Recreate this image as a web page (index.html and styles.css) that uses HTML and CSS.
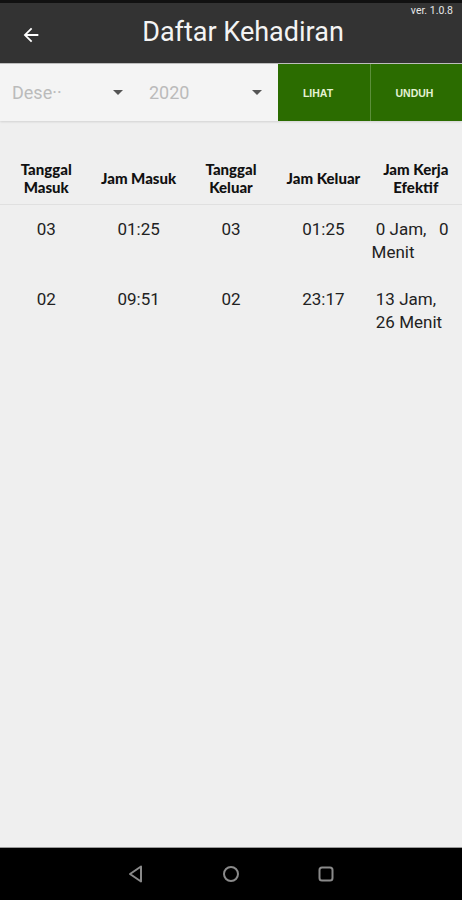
FILE: index.html
```html
<!DOCTYPE html>
<html lang="id">
<head>
    <meta charset="UTF-8">
    <meta name="viewport" content="width=device-width, initial-scale=1.0">
    <title>Daftar Kehadiran</title>
    <link rel="stylesheet" href="styles.css">
</head>
<body>
    <div class="screen">
        <div class="appbar">
            <span class="version">ver. 1.0.8</span>
            <svg class="back" width="22" height="22" viewBox="0 0 24 24">
                <path d="M20 11H7.83l5.59-5.59L12 4l-8 8 8 8 1.41-1.41L7.83 13H20v-2z" fill="#fff"/>
            </svg>
            <h1 class="title">Daftar Kehadiran</h1>
        </div>

        <div class="filter">
            <div class="select select-month">
                <span class="select-text">Dese··</span>
                <span class="caret"></span>
            </div>
            <div class="select select-year">
                <span class="select-text">2020</span>
                <span class="caret"></span>
            </div>
            <div class="btn btn-view">LIHAT</div>
            <div class="btn btn-download">UNDUH</div>
        </div>

        <div class="table">
            <div class="row head">
                <div class="cell">Tanggal<br>Masuk</div>
                <div class="cell">Jam Masuk</div>
                <div class="cell">Tanggal<br>Keluar</div>
                <div class="cell">Jam Keluar</div>
                <div class="cell">Jam Kerja<br>Efektif</div>
            </div>
            <div class="row data">
                <div class="cell">03</div>
                <div class="cell">01:25</div>
                <div class="cell">03</div>
                <div class="cell">01:25</div>
                <div class="cell cell-left">&nbsp;0 Jam,&nbsp;&nbsp; 0<br>Menit</div>
            </div>
            <div class="row data">
                <div class="cell">02</div>
                <div class="cell">09:51</div>
                <div class="cell">02</div>
                <div class="cell">23:17</div>
                <div class="cell cell-left">&nbsp;13 Jam,<br>&nbsp;26 Menit</div>
            </div>
        </div>

        <div class="spacer"></div>

        <div class="navbar">
            <svg width="20" height="20" viewBox="0 0 20 20">
                <path d="M15 2.5 L4 10 L15 17.5 Z" fill="none" stroke="#8a8a8a" stroke-width="2" stroke-linejoin="round"/>
            </svg>
            <svg width="20" height="20" viewBox="0 0 20 20">
                <circle cx="10" cy="10" r="7" fill="none" stroke="#8a8a8a" stroke-width="2"/>
            </svg>
            <svg width="20" height="20" viewBox="0 0 20 20">
                <rect x="3.5" y="3.5" width="13" height="13" rx="2.5" fill="none" stroke="#8a8a8a" stroke-width="2"/>
            </svg>
        </div>
    </div>
</body>
</html>
```

FILE: styles.css
```css
:root {
    --appbar: #333333;
    --bg: #efefef;
    --filter-bg: #f4f4f4;
    --green: #2b6c00;
    --text: #222222;
}

* {
    box-sizing: border-box;
}

body {
    margin: 0;
    font-family: Roboto, 'Noto Sans', Arial, sans-serif;
    background: #000;
}

.screen {
    width: 462px;
    height: 900px;
    display: flex;
    flex-direction: column;
    background: var(--bg);
    border-top: 3px solid #111;
}

.appbar {
    position: relative;
    height: 61px;
    background: var(--appbar);
    display: flex;
    align-items: center;
    justify-content: center;
    border-bottom: 1px solid #bdbdbd;
}

.version {
    position: absolute;
    top: 1px;
    right: 9px;
    font-size: 10.5px;
    color: #e8e8e8;
}

.back {
    position: absolute;
    left: 20px;
    top: 21px;
}

.title {
    margin: 0 0 2px 24px;
    font-size: 27px;
    font-weight: 400;
    color: #f4f4f4;
}

.filter {
    height: 57px;
    display: flex;
    background: var(--filter-bg);
    box-shadow: 0 1px 2px rgba(0, 0, 0, 0.12);
}

.select {
    display: flex;
    align-items: center;
    justify-content: space-between;
    font-size: 18px;
    color: #bbbbbb;
}

.select-month {
    width: 137px;
    padding: 0 14px 0 12px;
}

.select-year {
    width: 141px;
    padding: 0 16px 0 12px;
}

.caret {
    width: 0;
    height: 0;
    border-left: 5px solid transparent;
    border-right: 5px solid transparent;
    border-top: 5px solid #555;
}

.btn {
    display: flex;
    align-items: center;
    justify-content: center;
    background: var(--green);
    color: #e4f2d4;
    font-family: 'Liberation Sans', Arial, sans-serif;
    font-size: 10.5px;
    font-weight: 700;
}

.btn-view {
    width: 92px;
    padding-right: 12px;
}

.btn-download {
    flex: 1;
    padding-right: 4px;
    border-left: 1px solid #5c8f3a;
}

.table {
    margin-top: 39px;
}

.row {
    display: grid;
    grid-template-columns: repeat(5, 1fr);
}

.head {
    align-items: center;
    padding-bottom: 8px;
    border-bottom: 1px solid #e0e0e0;
    font-family: Lato, 'Noto Sans', sans-serif;
    font-weight: 900;
    font-size: 15px;
    line-height: 18px;
    color: #111;
}

.head .cell {
    text-align: center;
}

.data {
    padding-top: 13px;
    min-height: 70px;
    font-size: 17px;
    line-height: 23px;
    color: var(--text);
}

.data .cell {
    text-align: center;
}

.data .cell-left {
    text-align: left;
    padding-left: 2px;
}

.spacer {
    flex: 1;
}

.navbar {
    height: 53px;
    background: #000;
    border-top: 1px solid #9a9a9a;
    display: flex;
    align-items: center;
    justify-content: center;
    gap: 75px;
}
```
